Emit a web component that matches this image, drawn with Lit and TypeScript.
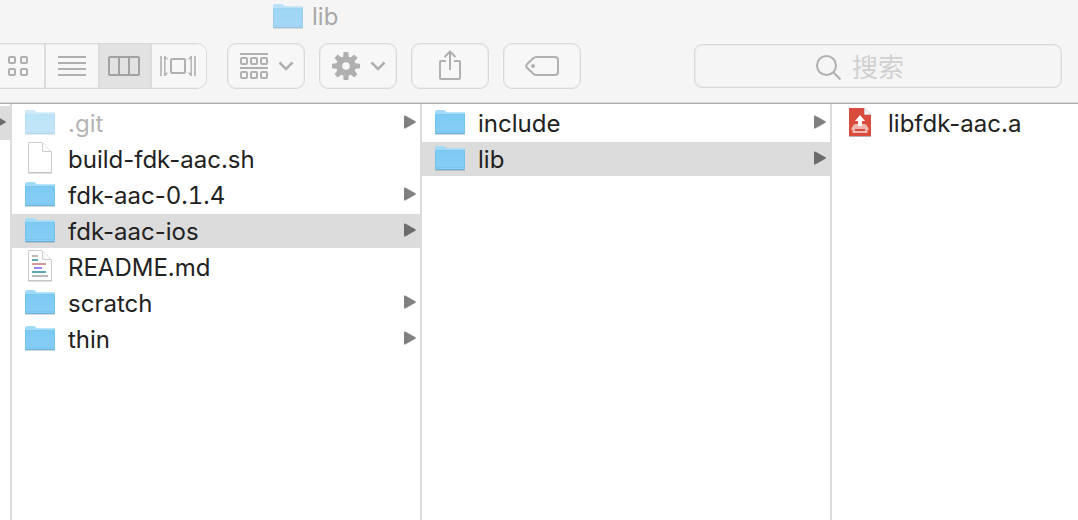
import { LitElement, html, css, svg, nothing } from "lit";
import { customElement, property, state } from "lit/decorators.js";
import { classMap } from "lit/directives/class-map.js";

type Kind = "folder" | "script" | "markdown" | "archive";

interface Entry {
  name: string;
  kind: Kind;
  hidden?: boolean;
}

const FIRST: Entry[] = [
  { name: ".git", kind: "folder", hidden: true },
  { name: "build-fdk-aac.sh", kind: "script" },
  { name: "fdk-aac-0.1.4", kind: "folder" },
  { name: "fdk-aac-ios", kind: "folder" },
  { name: "README.md", kind: "markdown" },
  { name: "scratch", kind: "folder" },
  { name: "thin", kind: "folder" },
];

const SECOND: Entry[] = [
  { name: "include", kind: "folder" },
  { name: "lib", kind: "folder" },
];

const THIRD: Entry[] = [{ name: "libfdk-aac.a", kind: "archive" }];

const page = svg`
  <path d="M3.5 .5H17L26.5 10V30.5H3.5Z" fill="#fff" stroke="#cdcdcd"/>
  <path d="M3 31H27" stroke="#bdbdbd"/>
  <path d="M17.5 1V9.5H26" fill="#fafafa" stroke="#cdcdcd"/>`;

const ART = {
  folder: svg`
    <defs>
      <linearGradient id="front" x1="0" y1="0" x2="0" y2="1">
        <stop offset="0" stop-color="#7bcbf4"/><stop offset="1" stop-color="#88cdf5"/>
      </linearGradient>
    </defs>
    <path d="M0 28.5H30" stroke="#000" stroke-opacity=".14"/>
    <path d="M0 6Q0 4 2 4H8.500Q9.500 4 10.200 4.800L11.500 6.200H29Q30 6.200 30 7.500V12H0Z" fill="#a2dbf9"/>
    <path d="M0 8.500H30V27Q30 28 29 28H1Q0 28 0 27Z" fill="url(#front)"/>
    <path d="M0 8.500H30" stroke="#7cc5ed"/>
    <path d="M1 25.500H29" stroke="#76c1ec" stroke-opacity=".7"/>
    <path d="M.5 27.500H29.500" stroke="#66b0dc"/>
    <path d="M.5 9V27M29.500 9V27" stroke="#70bce8" stroke-opacity=".7"/>`,
  script: page,
  markdown: svg`${page}
    <g stroke-width="2">
      <path d="M7 6H13M7 26H23" stroke="#b9b9b9"/>
      <path d="M7 10H13M7 22H21" stroke="#5fa5b8"/>
      <path d="M7 14H21" stroke="#d39a9a"/>
      <path d="M9 18H17" stroke="#9a83f4"/>
    </g>`,
  archive: svg`
    <path d="M4 2H19.500L26 8.500V30H4Z" fill="#d94b3d"/>
    <path d="M4 30.500H26" stroke="#b9b0ae"/>
    <path d="M19.500 2V8.500H26Z" fill="#f4f4f4" stroke="#dcdcdc" stroke-width=".6"/>
    <path d="M9.500 18H20.500L23.500 22V24H22.500V27H7.500V24H6.500V22Z" fill="#efb6b0"/>
    <path d="M10 24H20" stroke="#d94b3d" stroke-width="2"/>
    <path d="M15 9L20 15H17V20H13V15H10Z" fill="#fff"/>`,
};

@customElement("file-column")
export class FileColumn extends LitElement {
  @property({ attribute: false }) entries: Entry[] = [];
  @property() selected = "";

  static styles = css`
    :host { display: block; box-sizing: border-box; background: #fff; }
    .list { list-style: none; margin: 0; padding: 2px 0 0; display: grid; gap: 2px; }
    .row {
      display: flex; align-items: center; gap: 13px; box-sizing: border-box;
      width: 100%; height: 34px; padding: 0 4px 0 13px; border: 0; margin: 0;
      background: none; color: #222;
      font: 24px/32px Inter, "Liberation Sans", sans-serif; text-align: left;
    }
    .row.selected { background: #dcdcdc; }
    .icon { flex: none; display: block; }
    .name { flex: 1; padding-top: 2px; white-space: nowrap; }
    .version { font-variant-numeric: tabular-nums; }
    .hidden .icon { opacity: .5; }
    .hidden .name { color: #b4b4b4; }
    .arrow { flex: none; fill: #808080; }
    .selected .arrow { fill: #6c6c6c; }
  `;

  private pick(name: string) {
    this.selected = name;
  }

  /** Sets version numbers in tabular figures, the rest of the name as is. */
  private label(name: string) {
    return name
      .split(/(\d[\d.]*)/)
      .map((part, i) => (i % 2 ? html`<span class="version">${part}</span>` : part));
  }

  render() {
    return html`<ul class="list">
      ${this.entries.map((e) => html`<li>
        <button type="button"
          class=${classMap({ row: true, selected: e.name === this.selected, hidden: !!e.hidden })}
          @click=${() => this.pick(e.name)}>
          <svg class="icon" width="30" height="34" viewBox="0 0 30 34" fill="none" aria-hidden="true">${ART[e.kind]}</svg>
          <span class="name">${this.label(e.name)}</span>
          ${e.kind === "folder"
            ? html`<svg class="arrow" width="12" height="16" viewBox="0 0 12 16" aria-hidden="true"><path d="M0 1.300Q0 0 1.200 .6L11.400 6.300Q12.200 7 11.400 7.700L1.200 13.400Q0 14 0 12.700Z"/></svg>`
            : nothing}
        </button>
      </li>`)}
    </ul>`;
  }
}

const VIEWS = [
  {
    id: "icons", label: "Icons", w: 20, h: 20,
    art: svg`<g stroke-width="2"><rect x="1" y="1" width="6" height="6" rx="1"/><rect x="13" y="1" width="6" height="6" rx="1"/><rect x="1" y="13" width="6" height="6" rx="1"/><rect x="13" y="13" width="6" height="6" rx="1"/></g>`,
  },
  { id: "list", label: "List", w: 28, h: 20, art: svg`<path d="M0 1H28M0 7H28M0 13H28M0 19H28" stroke-width="2"/>` },
  {
    id: "columns", label: "Columns", w: 32, h: 20,
    art: svg`<rect x="1" y="1" width="30" height="18" rx="1" stroke-width="2"/><path d="M11 1V19M21 1V19" stroke-width="2"/>`,
  },
  {
    id: "flow", label: "Cover Flow", w: 36, h: 20,
    art: svg`<rect x="11" y="3" width="14" height="14" rx="1" stroke-width="2"/><path d="M1 0V20M35 0V20" stroke-width="1.600"/><path d="M4.800 0V20M31.200 0V20" stroke-width="1.400"/><path d="M5 0L8.500 3.500L5 3ZM5 20L8.500 16.500L5 17ZM31 0L27.500 3.500L31 3ZM31 20L27.500 16.500L31 17Z" fill="#b0b0b0" stroke="none"/>`,
  },
];

const chevron = html`<svg class="glyph" width="16" height="10" viewBox="0 0 16 10" aria-hidden="true"><path d="M1.500 1.500L8 8L14.500 1.500" stroke-width="2.600"/></svg>`;

@customElement("app-root")
export class AppRoot extends LitElement {
  @state() private view = "columns";

  static styles = css`
    :host {
      display: flex; flex-direction: column; min-height: 100vh; overflow: hidden;
      background: #fff; font-family: Inter, "Liberation Sans", "Noto Sans CJK SC", sans-serif;
    }
    .header { background: #f5f5f5; border-bottom: 1px solid #acacac; box-shadow: inset 0 -1px #dcdcdc; padding-bottom: 14px; }
    .title {
      display: flex; align-items: center; gap: 9px; height: 34px; margin: 0;
      padding-left: 273px; font-size: 24px; font-weight: 400; line-height: 34px; color: #a9a9a9;
    }
    .title .icon { opacity: .72; }
    .toolbar { display: flex; align-items: center; gap: 14px; margin-top: 9px; padding-right: 16px; }
    .views {
      display: grid; grid-template-columns: 46px 54px 52px 54px; box-sizing: border-box; height: 46px; margin-right: 6px;
      border: solid #d9d9d9; border-width: 1px 1px 1px 0; border-radius: 0 10px 10px 0; overflow: hidden;
    }
    .seg {
      display: flex; align-items: center; justify-content: center; box-sizing: border-box;
      padding: 0; border: 0; border-right: 2px solid #dcdcdc; background: #f7f7f7;
      box-shadow: inset 0 1px #ededed, inset 0 -1px #ededed;
    }
    .seg:first-child { padding-right: 8px; }
    .seg:last-child { border-right: 0; padding-right: 2px; }
    .seg.on { background: #e2e2e2; box-shadow: none; padding-right: 2px; }
    .seg.on .glyph { stroke: #a2a2a2; }
    .tool {
      display: flex; align-items: center; justify-content: center; gap: 10px; box-sizing: border-box;
      width: 78px; height: 46px; padding: 0; border: 1px solid #d9d9d9; border-radius: 9px; background: #f7f7f7;
      box-shadow: inset 0 0 0 1px #ededed;
    }
    .menu { padding-left: 2px; }
    .glyph { display: block; flex: none; fill: none; stroke: #b0b0b0; }
    .solid { fill: #b0b0b0; stroke: none; }
    .search {
      display: flex; align-items: center; justify-content: center; gap: 10px; box-sizing: border-box;
      width: 368px; height: 44px; margin-left: auto; border: 1px solid #d9d9d9; border-radius: 8px; background: #f5f5f5;
      box-shadow: inset 0 0 0 1px #ebebeb;
    }
    .query {
      width: 88px; height: 38px; padding: 0; border: 0; outline: 0; background: none; color: #222;
      font: 26px/38px "Noto Sans CJK SC", sans-serif;
    }
    .query::placeholder { color: #d0d0d0; opacity: 1; }
    .browser { flex: 1; display: flex; }
    .parent { flex: none; width: 10px; padding-top: 2px; }
    .crumb { display: flex; align-items: center; width: 10px; height: 34px; padding: 0; border: 0; background: #dcdcdc; }
    .crumb svg { fill: #6c6c6c; }
    .col { flex: none; width: 410px; border-left: 2px solid #dcdcdc; }
    .col.last { flex: 1; width: auto; }
  `;

  render() {
    return html`
      <header class="header">
        <h1 class="title">
          <svg class="icon" width="30" height="34" viewBox="0 0 30 34" fill="none" aria-hidden="true">${ART.folder}</svg>
          <span>lib</span>
        </h1>
        <div class="toolbar">
          <div class="views" role="group" aria-label="View">
            ${VIEWS.map((v) => html`<button type="button" aria-label=${v.label}
              class=${classMap({ seg: true, on: this.view === v.id })}
              @click=${() => (this.view = v.id)}>
              <svg class="glyph" width=${v.w} height=${v.h} viewBox="0 0 ${v.w} ${v.h}" aria-hidden="true">${v.art}</svg>
            </button>`)}
          </div>
          <button class="tool menu" type="button" aria-label="Arrange">
            <svg class="glyph" width="28" height="26" viewBox="0 0 28 26" stroke-width="2" aria-hidden="true">
              <path d="M0 1H28M0 15H28"/>
              ${[5, 19].map((y) => [1, 11, 21].map((x) => svg`<rect x=${x} y=${y} width="6" height="6" rx="1"/>`))}
            </svg>
            ${chevron}
          </button>
          <button class="tool menu" type="button" aria-label="Action">
            <svg class="glyph" width="28" height="28" viewBox="0 0 28 28" aria-hidden="true">
              <circle cx="14" cy="14" r="6.800" stroke-width="6"/>
              ${[0, 45, 90, 135, 180, 225, 270, 315].map((a) => svg`<path class="solid" d="M11 6L11.700 0H16.300L17 6Z" transform="rotate(${a} 14 14)"/>`)}
            </svg>
            ${chevron}
          </button>
          <button class="tool" type="button" aria-label="Share">
            <svg class="glyph" width="22" height="36" viewBox="0 0 22 36" stroke-width="2" aria-hidden="true">
              <path d="M7 13H2Q1 13 1 14V30Q1 31 2 31H20Q21 31 21 30V14Q21 13 20 13H15M11 22V3M5.500 9L11 3.500L16.500 9"/>
            </svg>
          </button>
          <button class="tool" type="button" aria-label="Tags">
            <svg class="glyph" width="34" height="20" viewBox="0 0 34 20" aria-hidden="true">
              <path d="M11.500 1H30Q33 1 33 4V16Q33 19 30 19H11.500Q9.500 19 8 17.500L1.800 11.500Q.5 10 1.800 8.500L8 2.500Q9.500 1 11.500 1Z" stroke-width="2"/>
              <circle class="solid" cx="8" cy="10" r="2"/>
            </svg>
          </button>
          <label class="search">
            <svg class="glyph" width="26" height="28" viewBox="0 -3 26 28" stroke-width="2" aria-hidden="true">
              <circle cx="10.500" cy="10.500" r="9.500"/><path d="M17.200 17.200L24.500 24.500"/>
            </svg>
            <input class="query" type="text" placeholder="搜索" aria-label="搜索" />
          </label>
        </div>
      </header>
      <main class="browser">
        <div class="parent">
          <button class="crumb" type="button" aria-label="Parent folder">
            <svg width="6" height="16" viewBox="6 0 6 16" aria-hidden="true"><path d="M0 0L11.400 6.300Q12 7 11.400 7.700L0 14Z"/></svg>
          </button>
        </div>
        <file-column class="col" .entries=${FIRST} selected="fdk-aac-ios"></file-column>
        <file-column class="col" .entries=${SECOND} selected="lib"></file-column>
        <file-column class="col last" .entries=${THIRD}></file-column>
      </main>
    `;
  }
}
